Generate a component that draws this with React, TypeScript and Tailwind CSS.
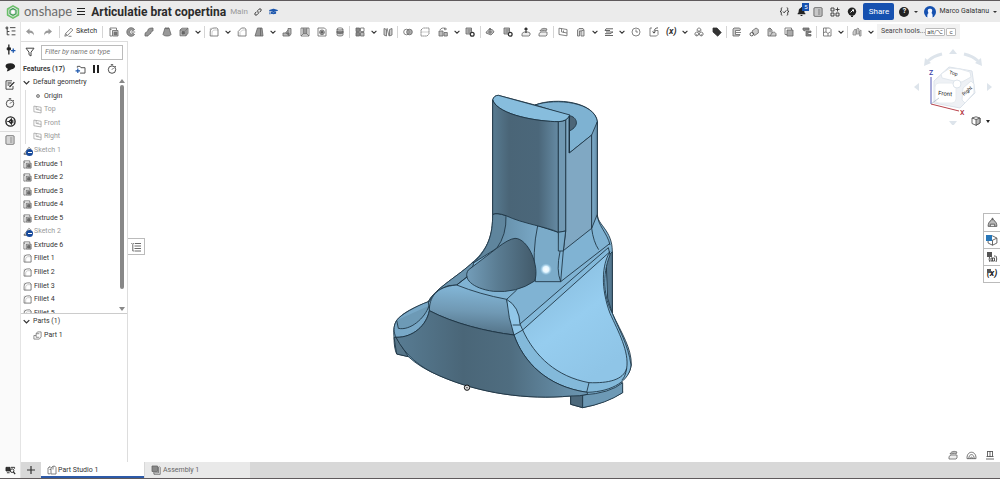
import type { ReactNode } from "react";
import { FaGraduationCap, FaBell } from "react-icons/fa";

const ICONS: Record<string, ReactNode> = {
  undo: <path d="M1 4.500 4.500 1.500v1.900C7.500 3.400 9 5 9 8.500 8 6.500 7 5.700 4.500 5.700v1.900z" fill="currentColor" stroke="none" />,
  redo: <path d="M9 4.500 5.500 1.500v1.900C2.500 3.400 1 5 1 8.500 2 6.500 3 5.700 5.500 5.700v1.900z" fill="currentColor" stroke="none" />,
  pencil: <path d="M.8 9.200 1.600 6.500 7 1.200 8.800 3 3.500 8.400zM1.600 6.500l1.900 1.900M4.500 9.300h3" />,
  extrude: <><path d="M3 9H1V1h6.500v2M1 2.500h1.500" /><path d="M3.500 3.500H9V9H3.500z" fill="#ccc" /><path d="M5.200 5.200h2.600v2.600H5.200z" fill="#777" /></>,
  revolve: <><path d="M8.600 2.500A4.300 4.300 0 1 0 8.600 7.500L6.800 6.300a2 2 0 1 1 0-2.600z" fill="#999" /><path d="M4.500 5h4.700" /></>,
  sweep: <path d="M1 9V7c0-2.500 3-1.500 3-4C4 1.500 6 1 9 1v3C7 4 7.400 5 7 6 6 8 4 7 4 9z" fill="#999" />,
  loft: <><path d="M3 1h4l2 6.500c-1 2-7 2-8 0z" fill="#999" /><path d="M3 1c1 1 3 1 4 0" /></>,
  thicken: <><path d="M1 3 3 1.200h6v5L7 8.800H1z" fill="#bbb" /><path d="M1 3h6v5.800M7 3l2-1.800" /><path d="M3 4.500h2.500v2.600H3z" fill="#666" /></>,
  fillet: <><path d="M1.200 9V5c0-2.500 1.500-4 4-4h2.500L9 2.200V9z" /><path d="M1.200 3V1.500L2.500 1M3 9V6c0-2 1-3 3-3h3" opacity=".4" /></>,
  chamfer: <><path d="M1.200 9V4.500L4.500 1h3L9 2.200V9z" /><path d="M3 9V5.500L5.500 3H9" opacity=".4" /></>,
  draft: <><path d="M3.500 1H8l1 8H1z" fill="#999" /><path d="M6.500 1v8" /></>,
  rib: <><path d="M1 6h2.500L6 3V1.500h3V7L7.500 9H1z" fill="#bbb" /><path d="M3.500 6H7v3M6 3v3" fill="#777" /></>,
  shell: <><path d="M1 1h8v8H1z" /><path d="M3 1v6h4V1M1 9l2-2M9 9 7 7" fill="#999" /></>,
  hole: <><path d="M1 1h6.500L9 2.500V9H1z" /><circle cx="5" cy="5.300" r="2.400" fill="#aaa" /><circle cx="5" cy="5.300" r="1" fill="#555" /></>,
  thread: <><path d="M2 2v6c0 1.300 6 1.300 6 0V2" fill="#ddd" /><ellipse cx="5" cy="2" rx="3" ry="1.100" /><path d="M2 4c1 1 5 1 6 0v2c-1 1-5 1-6 0z" fill="#777" /></>,
  pattern: <><rect x="1" y="1" width="3.500" height="3.500" fill="#888" /><rect x="5.500" y="1" width="3.500" height="3.500" /><rect x="1" y="5.500" width="3.500" height="3.500" fill="#888" /><rect x="5.500" y="5.500" width="3.500" height="3.500" fill="#bbb" /></>,
  mirror: <><path d="M1 1.500 3.500 2.500V9L1 8zM9 1.500 6.500 2.500V9L9 8z" fill="#ccc" /><path d="m4 1 2 8" /></>,
  boolean: <><circle cx="3.500" cy="5" r="2.800" /><circle cx="6.500" cy="5" r="2.800" fill="#888" fillOpacity=".7" /></>,
  split: <><path d="M1 3 3 1h6v6L7 9H1z" strokeDasharray="1.500 .5" /><path d="M1 5h8" opacity=".4" /></>,
  transform: <><path d="M1 4h4v5H1zM6 5.500h3.300V9H6z" fill="#bbb" /><path d="M2 3c1-2 3-2.500 5-1.500M7 .5v2.800M6 2h3" /></>,
  remove: <><path d="M1 1h5.500v6H1z" fill="#bbb" /><path d="M2.500 3h4M2.500 5h3" /><circle cx="7.200" cy="7.200" r="1.900" fill="#fff" stroke="#333" strokeWidth="1.300" /></>,
  moveFace: <><path d="M1 6c1-4 7-5 8-1L6 8z" fill="#bbb" /><path d="M5 1v6M3.600 3 5 1l1.400 2M3 5h4" /></>,
  appearance: <><path d="M5 .8 7.500 6h-5z" fill="#777" /><path d="M3.800 3C2 4 1 6 1 8.500h8C9 6 8 4 6.200 3M3 8.500V6.500h4v2" fill="#bbb" /></>,
  offset: <><path d="M1 9V6.500l2-1.500h4l2 1v2L8 9z" fill="#eee" /><path d="M5 1v5M3.500 2.500 5 1l1.500 1.500" stroke="#333" strokeWidth="1.200" /></>,
  replace: <><path d="M1 9V6.500L3 5h6v3L8 9z" fill="#eee" /><path d="M2 4c1-3 5-3 7-2L8 4C6 3 4 4 2 4z" fill="#bbb" /></>,
  plane: <path d="M1 1.200 9 2.500v6.300L1 7.500zM3.500 1.600v3.300L9 6M5.500 3.500v2" />,
  frame: <path d="M1.500 3 3 1.500h4L8 3v6H5V4H3.500v5h-2zM8 3 5 4" fill="#ddd" />,
  helix: <path d="M2 1.800h7M1 3.500h5M2 5h7M1 6.700h5M1 8.500h8M2 1.800 1 3.500M9 5 6 6.700" strokeWidth="1" />,
  clock: <><circle cx="5" cy="5" r="4" /><path d="M5 2.500V5h2" /></>,
  derive: <><path d="M3 1H1v8h6.500L9 7.500V3.500H6" /><path d="M9 .8C6 1 5 2.500 5 6M3.500 4.500 5 6.200l1.500-1.700" stroke="#333" /></>,
  composite: <path d="M5 .8 6.800 2v2L5 5 3.200 4V2zM2.800 5l1.800 1v2L2.800 9 1 8V6zM7.200 5 9 6v2L7.200 9l-1.800-1V6zM5 3v2M2.800 7v2M7.200 7v2" />,
  tag: <path d="M1 1h4l4.200 4.500-3.500 3.700L1 5z" fill="#333" stroke="#333" />,
  sheet: <><path d="M8.500 2 7.500 1H2L1 2v7h6l1-1.500H3.500v-4H8z" fill="#ccc" /><path d="M4 5.500h5" /></>,
  flange: <><path d="M3 4 7 1l2.300 1.500V6L5.500 8.500z" fill="#ccc" /><circle cx="2.700" cy="7.200" r="1.700" stroke="#333" /></>,
  hem: <path d="M1 9V2l2-1 2 2v3c2-2 4 0 4 1v2zM3 1v4M5 6l-2 3" fill="#ccc" />,
  tab: <><path d="M1 1h6.500v6.500H1z" /><path d="M3 3h6v6H3z" fill="#aaa" /></>,
  joint: <path d="M1 1h6v2H3v1L1 3zM4 4h5v1.500H6v2h3V9H4z" fill="#888" />,
  finish: <><path d="M1.500 1h6L9 2.500V9H1.500z" /><path d="M4 1v4l2 1.500L8 5M1.500 5.500 4 5M6 6.500V9" /></>,
  frames: <path d="M1 8V5l2-3 1 1v5zM4.500 7V2L6 1l1 1v5zM7.500 9V4L9 3v6z" fill="#ccc" stroke="#888" />,
  part: <path d="M1 9V5h2.500V3L5 1h4v5.500L7 9zM3.500 5v2H7M3.500 3H7" />,
  sketch: <path d="M1 9 6.500 1.500 8.500 3 4 9zM1 9h4" />,
  studio: <path d="M3.500 8.800H1V3L3 1.500V3M4 9V3l2-1.800h2L9 2.500V9zM6 1.200v3.300M2.500 4.500h1.500" />,
  assembly: <><path d="M1 1h5.500v5.500H1z" fill="#888" /><path d="M3 8v1.300h6.200V2.500L8 1.300M2 7.800h5.500V2" /></>,
  tree: <path d="M4.500 1.500h5M6 4.500h3.500M6 8h3.500M1 1h1.500v1.500H1zM2 2.500V8h2M2 5h2" />,
  note: <><path d="M7 .8H1v8.400h7V6" /><path d="M2.500 3h4M2.500 5h2M4.500 7 9.300 2.200" strokeWidth="1.200" /></>,
  stopwatch: <><circle cx="5" cy="5.600" r="3.700" /><path d="M3.800.7h2.400M5 5.600l1.500-1.500M8 2l.8.800" /></>,
  list: <><rect x="1" y=".8" width="8" height="8.400" rx=".6" /><path d="M2.500 3h1M4.500 3h3.200M2.500 5h1M4.500 5h3.200M2.500 7h1M4.500 7h3.200" /></>,
  insert: <><path d="M3.500.5v9" strokeWidth="1.200" /><path d="M2 3.500h3v1.800H2z" fill="currentColor" /><path d="M7.500 4v4M5.500 6h4" stroke="#1d57ad" strokeWidth="1.200" /></>,
  cube: <path d="M5 .8 9 2.800v4.500L5 9.300 1 7.300V2.800zM1 2.800l4 2 4-2M5 4.800v4.500" />,
};

type IconProps = { name: string; className?: string };

const Icon = ({ name, className = "size-[10px] text-[#666]" }: IconProps) => (
  <svg viewBox="0 0 10 10" className={`shrink-0 ${className}`} fill="none" stroke="currentColor" strokeWidth=".8" strokeLinejoin="round" aria-hidden="true">
    {ICONS[name]}
  </svg>
);

const Chevron = ({ className = "size-[6px]" }: { className?: string }) => (
  <svg viewBox="0 0 6 6" className={`shrink-0 ${className}`} fill="none" stroke="#333" strokeWidth="1.100" aria-hidden="true">
    <path d="m.6 1.800 2.400 2.400 2.400-2.400" />
  </svg>
);

// "v" is a drop-down arrow, "|" is a divider
const TOOLS =
  "extrude revolve sweep loft thicken v | fillet v chamfer draft v rib shell hole thread | pattern v mirror | boolean split transform v remove | moveFace remove offset replace | plane frame v helix v clock derive variable v composite tag | sheet flange hem tab joint | finish v | frames v".split(" ");

const Tool = ({ name }: { name: string }) => {
  if (name === "|") {
    return <span className="flex min-w-0 flex-[1] justify-center"><span className="h-3 w-px bg-[#d5d5d5]" /></span>;
  }
  if (name === "v") {
    return <button aria-label="More" className="flex min-w-0 flex-[4] justify-center"><Chevron /></button>;
  }
  return (
    <button aria-label={name} className="flex min-w-0 flex-[7] items-center justify-center">
      {name === "variable" ? <span className="text-[9px] leading-none font-bold text-[#333] italic">(x)</span> : <Icon name={name} />}
    </button>
  );
};

const Header = () => (
  <header className="flex h-[22px] shrink-0 items-center border-t border-[#5f5a5c] bg-[#ebebeb] text-[#333]">
    <a href="#home" className="ml-[6px] flex items-center gap-[4px]">
      <svg viewBox="0 0 14 14" className="size-[14px]" fill="none" aria-hidden="true">
        <path d="M7 .9 12.400 4v6L7 13.100 1.600 10V4z" stroke="#6abf69" strokeWidth="1.600" strokeLinejoin="round" />
        <path d="M7 3.600 10 5.300v3.400L7 10.400 4 8.700V5.300z" stroke="#3f9d56" strokeWidth="1.300" />
        <path d="M4 5.300 1.600 4M10 8.700l2.400 1.300M7 10.400v2.700" stroke="#8fcf85" />
        <path d="m5.800 6.300 1.200-.7 1.200.7v1.400L7 8.400l-1.200-.7z" fill="#fff" />
      </svg>
      <span className="font-[Lato] text-[13px] leading-none text-[#6b6b6b]">onshape</span>
    </a>
    <button aria-label="Menu" className="ml-[5px] flex w-2 flex-col gap-[2px]">
      <span className="h-px w-full bg-[#222]" />
      <span className="h-px w-full bg-[#222]" />
      <span className="h-px w-full bg-[#222]" />
    </button>
    <h1 className="ml-[6px] text-[12px] leading-none font-bold text-[#2b2b2b]">Articulatie brat copertina</h1>
    <span className="ml-[4px] text-[8px] leading-none text-[#999]">Main</span>
    <button aria-label="Copy link" className="ml-[6px]">
      <svg viewBox="0 0 10 10" className="size-[8px]" fill="none" stroke="#333" strokeWidth="1.200" aria-hidden="true">
        <path d="M4.500 5.500C3.700 4.500 4 3.800 4.600 3.200L6.300 1.500C8 0 10 2 8.500 3.700L7.300 5M5.500 4.500c.8 1 .5 1.700-.1 2.300L3.700 8.500C2 10 0 8 1.500 6.300L2.700 5" />
      </svg>
    </button>
    <FaGraduationCap className="ml-[7px] size-[9px] text-[#1d57ad]" />
    <div className="ml-auto flex items-center pr-[3px]">
      <button aria-label="Feature script">
        <svg viewBox="0 0 12 10" className="h-[9px] w-[11px]" fill="none" stroke="#333" strokeWidth="1.100" aria-hidden="true">
          <path d="M3.500.8C2 .8 2.500 2 2.500 3.500 2.500 4.500 2 5 1 5c1 0 1.500.5 1.500 1.500C2.500 8 2 9.200 3.500 9.200M8.500.8c1.500 0 1 1.200 1 2.700 0 1 .5 1.500 1.500 1.500-1 0-1.500.5-1.500 1.500 0 1.500.5 2.700-1 2.700M4.300 5l1.300 1.500L8 3.700" />
        </svg>
      </button>
      <button aria-label="Notifications" className="relative ml-[7px]">
        <FaBell className="size-[9px] text-[#222]" />
        <span className="absolute -top-[4px] left-[5px] flex h-[8px] w-[7px] items-center justify-center bg-[#1651b0] text-[6px] leading-none text-white">5</span>
      </button>
      <button aria-label="Checklist" className="ml-[7px]"><Icon name="list" className="size-[10px] text-[#333]" /></button>
      <button aria-label="App store" className="ml-[7px]">
        <svg viewBox="0 0 10 10" className="size-[10px]" fill="none" stroke="#333" strokeWidth=".9" aria-hidden="true">
          <path d="M1 1h3v3H1zM1 6h3v3H1zM6 6h3v3H6zM7.500.5v4M5.500 2.500h4" />
        </svg>
      </button>
      <button aria-label="Learning" className="ml-[7px]">
        <svg viewBox="0 0 10 10" className="size-[10px]" aria-hidden="true">
          <circle cx="5" cy="4.600" r="4.200" fill="#222" />
          <path d="M4 9.500h2" stroke="#222" strokeWidth="1.500" />
          <path d="m3.500 5.500 3-3M5 3h1.500v1.600" stroke="#fff" fill="none" />
        </svg>
      </button>
      <button className="ml-[6px] h-[17px] w-[31px] rounded-[2px] bg-[#1651b0] text-[8px] text-white">Share</button>
      <button aria-label="Help" className="ml-[5px] flex items-center gap-[5px]">
        <span className="flex size-[10px] items-center justify-center rounded-full bg-[#222] text-[7px] font-bold text-white">?</span>
        <span className="border-x-2 border-t-2 border-x-transparent border-t-[#333]" />
      </button>
      <button className="ml-[6px] flex items-center text-[7px]">
        <svg viewBox="0 0 12 12" className="size-[12px]" aria-hidden="true">
          <circle cx="6" cy="6" r="6" fill="#1651b0" />
          <path d="M3.500 12C3 8 4 7.500 4.500 7 3 4 4 2.800 6 2.800S9 4 7.500 7C8 7.500 9 8 8.500 12z" fill="#f5f8ff" />
        </svg>
        <span className="ml-[3px]">Marco Galatanu</span>
        <span className="ml-[4px] border-x-2 border-t-2 border-x-transparent border-t-[#333]" />
      </button>
    </div>
  </header>
);

const Toolbar = () => (
  <div className="flex h-[19px] shrink-0 items-center bg-white">
    <div className="flex h-full w-[21px] shrink-0 items-center justify-center border-r border-[#e4e4e4] bg-[#fafafa]">
      <Icon name="tree" className="size-[11px] text-[#333]" />
    </div>
    <button aria-label="Undo" className="ml-[4px]"><Icon name="undo" className="size-[10px] text-[#999]" /></button>
    <button aria-label="Redo" className="ml-[8px]"><Icon name="redo" className="size-[10px] text-[#999]" /></button>
    <span className="ml-[6px] h-3 w-px shrink-0 bg-[#d5d5d5]" />
    <button className="ml-[4px] flex shrink-0 items-center gap-[2px] text-[7px] text-[#333]">
      <Icon name="pencil" />
      Sketch
    </button>
    <span className="ml-auto h-3 w-px shrink-0 bg-[#d5d5d5]" />
    <div className="ml-[2px] flex w-[771px] max-w-[calc(100%-229px)] flex-none items-center">
      {TOOLS.map((name, i) => <Tool key={i} name={name} />)}
    </div>
    <button className="mr-[40px] ml-px flex h-[15px] w-[83px] shrink-0 items-center bg-[#f2f2f2] pl-[4px] text-[7px] whitespace-nowrap text-[#444]">
      Search tools...
      <kbd className="ml-auto rounded-[1px] border border-[#bbb] bg-white px-px font-[Roboto] text-[6px] leading-[6px]">alt/⌥</kbd>
      <kbd className="mr-[5px] ml-px rounded-[1px] border border-[#bbb] bg-white px-[2px] font-[Roboto] text-[6px] leading-[6px]">c</kbd>
    </button>
  </div>
);

const LeftRail = () => (
  <nav className="flex w-[21px] shrink-0 flex-col items-center border-r border-[#e4e4e4] bg-[#fafafa] text-[#222]">
    <button aria-label="Insert" className="mt-[3px]"><Icon name="insert" className="size-[11px] text-[#222]" /></button>
    <button aria-label="Comments" className="mt-[7px]">
      <svg viewBox="0 0 12 10" className="h-[10px] w-[11px]" fill="#222" aria-hidden="true">
        <path d="M6 .8c6.600 0 6.600 6.800.5 6.800C5 9 3.500 9.500 2 9.500L3 7C-.8 5-.3.8 6 .8z" />
      </svg>
    </button>
    <button aria-label="Notes" className="mt-[8px]"><Icon name="note" className="size-[10px] text-[#222]" /></button>
    <button aria-label="History" className="mt-[8px]"><Icon name="stopwatch" className="size-[10px] text-[#222]" /></button>
    <button aria-label="Render" className="mt-[8px]">
      <svg viewBox="0 0 12 12" className="size-[11px]" fill="none" stroke="#222" aria-hidden="true">
        <circle cx="6" cy="6" r="5" strokeWidth="1.500" />
        <path d="M2.500 6h2L7 3.500v5L4.500 6M8.500 4v4" strokeWidth="1.300" />
      </svg>
    </button>
    <span className="mt-[4px] h-px w-full bg-[#ddd]" />
    <button aria-label="Properties" className="mt-[3px]"><Icon name="list" className="size-[10px] text-[#444]" /></button>
    <button aria-label="Search in tab" className="mt-auto mb-[3px]">
      <svg viewBox="0 0 12 10" className="h-[9px] w-[11px]" fill="none" stroke="#222" aria-hidden="true">
        <path d="M1 1.500h4.500v4H1z" fill="#333" />
        <path d="M6.500 1.500h4V3M2 7.500h3" />
        <circle cx="7.800" cy="5.200" r="2" />
        <path d="m9.200 6.600 2 2.400" strokeWidth="1.300" />
      </svg>
    </button>
  </nav>
);

const FEATURES = [
  { label: "Sketch 1", icon: "sketch" },
  ...[1, 2, 3, 4, 5].map((n) => ({ label: `Extrude ${n}`, icon: "extrude" })),
  { label: "Sketch 2", icon: "sketch" },
  { label: "Extrude 6", icon: "extrude" },
  ...[1, 2, 3, 4, 5].map((n) => ({ label: `Fillet ${n}`, icon: "fillet" })),
];

const FeaturePanel = () => (
  <aside className="flex w-[107px] shrink-0 flex-col border-t border-r border-[#ddd] bg-white text-[7px] leading-none text-[#333]">
    <div className="flex h-[20px] shrink-0 items-center pr-[4px] pl-[4px]">
      <svg viewBox="0 0 10 10" className="size-[10px] shrink-0" fill="none" stroke="#444" aria-hidden="true">
        <path d="M1 1.200h8L6 5.200V9L4 7.700V5.200z" />
      </svg>
      <input aria-label="Filter features" placeholder="Filter by name or type" className="ml-[6px] h-[15px] min-w-0 flex-1 border border-[#bbb] px-[3px] text-[7px] italic placeholder:text-[#777]" />
    </div>
    <div className="flex h-[14px] shrink-0 items-center pr-[10px] pl-[2px]">
      <h2 className="font-semibold">Features (17)</h2>
      <button aria-label="New folder" className="ml-auto">
        <svg viewBox="0 0 12 10" className="h-[9px] w-[11px]" fill="none" stroke="#444" aria-hidden="true">
          <path d="M2.500 3V1.500h3L6.500 3h4.500v6H5.500" />
          <path d="M3 4v5M.5 6.500h5" stroke="#1d57ad" strokeWidth="1.300" />
        </svg>
      </button>
      <button aria-label="Pause" className="ml-[7px] h-[8px] w-[6px] border-x-2 border-[#222]" />
      <button aria-label="Regeneration times" className="ml-[8px]"><Icon name="stopwatch" className="size-[10px] text-[#222]" /></button>
    </div>
    <div className="flex h-[238px] shrink-0 overflow-hidden border-b border-[#ccc]">
      <ul className="grid h-[244px] min-w-0 flex-1 auto-rows-fr items-center">
        <li className="flex items-center gap-[3px] pl-[2px]"><Chevron className="size-[7px]" />Default geometry</li>
        <li className="ml-[4px] flex h-full items-center border-l border-[#ddd] pl-[8px]">
          <span className="mr-[4px] ml-[2px] size-[4px] rounded-full border border-[#888] bg-[#bbb]" />
          Origin
        </li>
        {["Top", "Front", "Right"].map((name) => (
          <li key={name} className="ml-[4px] flex h-full items-center gap-[2px] border-l border-[#ddd] pl-[7px] text-[#999]">
            <Icon name="plane" className="size-[9px] text-[#999]" />
            {name}
          </li>
        ))}
        {FEATURES.map(({ label, icon }) => (
          <li key={label} className={`flex items-center gap-[2px] pl-[2px] ${icon === "sketch" ? "text-[#999]" : ""}`}>
            <span className="relative flex">
              <Icon name={icon} className="size-[9px] text-[#555]" />
              {icon === "sketch" && (
                <span className="absolute top-[3px] left-[3px] flex size-[7px] items-center justify-center rounded-full bg-[#174a9c]">
                  <span className="h-px w-[4px] bg-white" />
                </span>
              )}
            </span>
            {label}
          </li>
        ))}
      </ul>
      <div className="flex w-[11px] flex-col items-center pt-[3px] pb-[2px]">
        <span className="border-x-[3px] border-b-[4px] border-x-transparent border-b-[#888]" />
        <span className="mt-[2px] h-[204px] w-[4px] rounded-full bg-[#888]" />
        <span className="mt-auto border-x-[3px] border-t-[4px] border-x-transparent border-t-[#888]" />
      </div>
    </div>
    <h2 className="flex h-[14px] items-center gap-[3px] pl-[2px]"><Chevron className="size-[7px]" />Parts (1)</h2>
    <div className="flex h-[14px] items-center gap-[2px] pl-[12px]"><Icon name="part" className="size-[9px] text-[#666]" />Part 1</div>
  </aside>
);

const Model = () => (
  <svg viewBox="-756 -132 2616 1263" className="size-full" fill="none" stroke="#1d3342" strokeWidth="2.600" strokeLinejoin="round" role="img" aria-label="Part 1">
    <defs>
      <linearGradient id="plate">
        <stop offset="0" stopColor="#587b91" />
        <stop offset=".25" stopColor="#4a6577" />
        <stop offset=".7" stopColor="#4b677a" />
        <stop offset="1" stopColor="#658aa3" />
      </linearGradient>
      <linearGradient id="side">
        <stop offset="0" stopColor="#7fb0cf" />
        <stop offset="1" stopColor="#648ca7" />
      </linearGradient>
      <linearGradient id="neck">
        <stop offset="0" stopColor="#5b7f96" />
        <stop offset=".5" stopColor="#6e9ab6" />
        <stop offset="1" stopColor="#86b8d8" />
      </linearGradient>
      <linearGradient id="bore">
        <stop offset="0" stopColor="#739db9" />
        <stop offset=".45" stopColor="#5a7c92" />
        <stop offset="1" stopColor="#425a6a" />
      </linearGradient>
      <linearGradient id="roll" x1=".3" y1="0" x2=".2" y2="1">
        <stop offset="0" stopColor="#83b7d8" />
        <stop offset=".5" stopColor="#7099b4" />
        <stop offset="1" stopColor="#4f6d81" />
      </linearGradient>
      <linearGradient id="front">
        <stop offset="0" stopColor="#587c93" />
        <stop offset=".35" stopColor="#4a6678" />
        <stop offset=".6" stopColor="#4f6d80" />
        <stop offset="1" stopColor="#6d98b4" />
      </linearGradient>
      <linearGradient id="wing" x1="0" y1="0" x2=".6" y2="1">
        <stop offset="0" stopColor="#82b5d5" />
        <stop offset=".6" stopColor="#96cdef" />
        <stop offset="1" stopColor="#8fc5e7" />
      </linearGradient>
      <radialGradient id="glow">
        <stop offset="0" stopColor="#fff" />
        <stop offset=".5" stopColor="#e4f6ff" />
        <stop offset="1" stopColor="#9fd2ef" stopOpacity="0" />
      </radialGradient>
    </defs>

    {/* silhouette */}
    <path
      d="M338 45Q342 31 355 31L465 60C530 35 645 52 652 110V388C652 420 697 435 697 500V685C725 745 755 790 754 840Q750 870 725 885L728 923Q670 957 608 968L572 958V933C440 945 300 925 180 873Q120 848 85 815L50 807Q42 790 42 757 38 725 50 706C70 680 110 665 145 650 165 610 240 570 280 530 325 490 338 450 338 388z"
      fill="#80b3d3"
    />
    {/* feet */}
    <path d="M42 757 50 807 85 815 48 757z" fill="#567589" />
    <path d="M572 930V958L608 968V930z" fill="#4d697c" />
    <path d="M608 968Q680 955 728 923V893Q690 925 608 930z" fill="#6d99b5" />

    {/* neck and left flank */}
    <path d="M338 388Q350 382 378 392 430 417 473 422 510 430 535 442L542 590H466L350 490 280 530C325 490 338 450 338 388z" fill="url(#neck)" stroke="none" />
    <path d="M338 388Q350 382 378 392 380 450 350 490L280 534C325 490 338 450 338 388z" fill="#5f859d" />
    <path d="M473 422 535 442 540 500Q528 555 542 590H466Q456 500 473 422z" fill="#7babc9" />
    <path d="M145 650C165 610 240 570 280 530V540L262 575 230 600 205 602Q165 615 148 650z" fill="#6a94ae" />

    {/* back cylinder and slot */}
    <path d="M465 60C530 38 645 52 652 110Q650 140 633 152L568 204V92z" fill="#7eb2d2" />
    <path d="M568 92C590 95 602 122 568 138z" fill="#4d6678" />
    <path d="M557 105 568 92V204L635 150V430L550 497 557 440z" fill="#80a8c3" />
    <path d="M635 150 652 110V388L635 430z" fill="url(#side)" />
    <path d="M635 430Q640 470 656 494M652 388C652 420 683 445 690 480M550 497 542 590 690 475" />

    {/* front plate */}
    <path d="M338 45Q342 31 355 31L570 90Q560 110 535 110C480 110 355 92 338 45z" fill="#87bddd" />
    <path d="M338 45C355 92 480 110 535 110V442C500 425 430 417 378 392Q350 382 338 388z" fill="url(#plate)" />
    <path d="M535 110Q550 110 557 105V438L535 442z" fill="#7199b3" />
    <path d="M535 442V498H550L557 438z" fill="#79a9c7" />
    <path d="M568 92V204" strokeWidth="4" />

    {/* through hole */}
    <path d="M405 460C445 460 480 545 464 588Q410 625 340 619C275 610 248 580 265 555L350 490Q385 462 405 460z" fill="url(#bore)" />

    {/* right wing */}
    <path d="M678 520 697 500V685L683 640z" fill="#557991" />
    <path d="M402 750C430 830 500 905 622 922 700 920 750 885 753 840 745 780 715 730 697 685 672 640 665 570 690 510L685 488 420 717z" fill="#83b9da" />
    <path d="M428 735 690 500C665 540 662 610 690 685 715 740 748 800 740 850 730 885 685 895 627 893 530 875 465 815 428 735z" fill="url(#wing)" />
    <path d="M627 893 620 922M725 885Q735 880 740 850" />

    {/* front roll */}
    <path d="M148 677C148 640 165 605 230 600Q300 628 380 643 392 700 402 750C320 740 220 715 148 677z" fill="url(#roll)" />
    <path d="M380 643Q418 665 420 717L428 735 402 750Q385 700 380 643z" fill="#91c7e8" />
    <path d="M398 720H420M380 643 410 615M262 575 230 600" />

    {/* left lobe */}
    <path d="M145 650C110 662 60 690 50 706 38 725 42 745 48 757 100 758 140 720 148 677z" fill="#78a8c7" />
    <path d="M50 706 55 730C90 738 135 700 147 662" fill="#6d9ab6" />

    {/* front face */}
    <path d="M148 677C220 715 320 740 402 750 430 830 500 905 622 922V928Q600 934 572 933C440 945 300 925 180 873 120 848 75 810 48 757 100 758 140 720 148 677z" fill="url(#front)" />

    <circle cx="498" cy="553" r="18" fill="url(#glow)" stroke="none" />
    <circle cx="261" cy="908" r="8" fill="#ddd" stroke="#111" strokeWidth="3" />
    <circle cx="261" cy="908" r="2" fill="#111" stroke="none" />
  </svg>
);

const CanvasControls = () => (
  <>
    <svg viewBox="910 45 90 80" className="absolute top-[4px] right-0 h-[80px] w-[90px] font-[Roboto]" fill="none" role="img" aria-label="View cube">
      <g fill="#dde4eb">
        <path d="m953 49 4 5h-8zM953 126l4-5h-8zM914 87l5-4v8zM992 87l-5-4v8z" />
        <path d="m924 66 1-8 6 5zM982 66l-1-8-6 5z" />
      </g>
      <path d="M928 61Q933 56 942 54M964 54Q973 56 978 61" stroke="#dde4eb" strokeWidth="3" />
      <path d="m934 81 15-14 23 4 3 22-15 15-26-5z" fill="#eef1f5" stroke="#dbe2ea" strokeLinejoin="round" />
      <path d="m941 74 9-6q10 0 20 4l1 5-9 5q-10-1-20-4z" fill="#fff" stroke="#e1e7ed" />
      <rect x="935" y="83" width="21" height="20" rx="4" fill="#fff" stroke="#e8ecf0" />
      <path d="m963 88 8-7 3 3v9l-9 10-3-3z" fill="#fff" stroke="#e1e7ed" />
      <circle cx="957" cy="84" r="4" fill="#fff" stroke="#dde4eb" />
      <path d="M931 77v27" stroke="#5558b5" />
      <path d="m931 104 28 7" stroke="#b9434c" />
      <path d="m931 104 8-6" stroke="#9ab" strokeWidth=".6" />
      <text x="929" y="75" fontSize="7" fontWeight="500" fill="#3b3fa8">Z</text>
      <text x="960" y="115" fontSize="7" fontWeight="500" fill="#b02a35">X</text>
      <text x="938" y="95" fontSize="6" fill="#222" transform="rotate(5 938 95)">Front</text>
      <text x="964" y="96" fontSize="5" fill="#222" transform="rotate(-42 964 96)">Right</text>
      <text x="949" y="74" fontSize="5" fill="#222" transform="rotate(12 949 74)">Top</text>
    </svg>
    <button aria-label="View options" className="absolute top-[75px] right-[10px] flex items-center gap-[5px]">
      <svg viewBox="0 0 10 10" className="size-[10px]" stroke="#444" strokeWidth=".8" strokeLinejoin="round" aria-hidden="true">
        <path d="m1 2 4-1.200 4 1.200v5L5 9.300 1 7.500z" fill="#fff" />
        <path d="m5 3.500 4-1.500v5L5 9.300z" fill="#bbb" />
        <path d="m1 2 4 1.500" />
      </svg>
      <span className="border-x-2 border-t-[3px] border-x-transparent border-t-[#222]" />
    </button>
    <button aria-label="Feature list" className="absolute top-[197px] left-0 flex h-[17px] w-[17px] items-center justify-center border border-l-0 border-[#bbb] bg-white">
      <svg viewBox="0 0 10 10" className="size-[10px]" fill="none" stroke="#444" strokeWidth=".8" aria-hidden="true">
        <path d="m.4 1 1.400 1.500L3.200 1M4 1.500h6M3.500 4H10M3.500 6.500H10M3.500 9H10M1.800 3v6h1" />
      </svg>
    </button>
    <div className="absolute top-[172px] right-0 flex w-[17px] flex-col border border-r-0 border-[#bbb] bg-white">
      <button aria-label="Appearance" className="flex h-[17px] items-center justify-center"><Icon name="appearance" className="size-[11px] text-[#555]" /></button>
      <button aria-label="Configurations" className="relative flex h-[17px] items-center justify-center border-t border-[#bbb]">
        <Icon name="cube" className="size-[11px] text-[#555]" />
        <span className="absolute top-[3px] left-[2px] size-[6px] bg-[#2877b8]" />
      </button>
      <button aria-label="Named views" className="relative flex h-[17px] items-center justify-center border-t border-[#bbb]">
        <svg viewBox="0 0 11 11" className="size-[11px]" fill="none" stroke="#444" strokeWidth=".9" aria-hidden="true">
          <path d="M2.500 5Q1.500 8 3 10M9 4q1.500 3 0 6M4 6h3.500v3H4zM5.500 6v3M7 4h1.500" />
        </svg>
        <span className="absolute top-[3px] left-[3px] size-[5px] bg-[#555]" />
      </button>
      <button aria-label="Variables" className="relative flex h-[17px] items-center justify-center border-t border-[#bbb] text-[9px] font-bold text-[#222] italic">
        (x)
        <span className="absolute top-[3px] left-[3px] size-[4px] bg-[#555]" />
      </button>
    </div>
    <div className="absolute right-[5px] bottom-[2px] flex items-center gap-[8px]">
      <Icon name="replace" />
      <svg viewBox="0 0 12 10" className="h-[9px] w-[11px]" fill="none" stroke="#555" strokeWidth=".9" aria-hidden="true">
        <path d="M1 8.500C.5-1 11.500-1 11 8.500zM3 8.500c0-6 6-6 6 0M5 8.500c0-2.500 2-2.500 2 0" />
      </svg>
      <svg viewBox="0 0 10 10" className="size-[10px]" fill="none" stroke="#444" strokeWidth=".8" aria-hidden="true">
        <path d="M1 9h8M2 1.500h6M5 1v6M1.500 6.500h7M2.500 1.500v5M7.500 1.500v5" />
      </svg>
    </div>
  </>
);

const TabBar = () => (
  <div className="flex h-[16px] shrink-0 bg-[#d8d8d8] text-[7px] text-[#333]">
    <button aria-label="New tab" className="flex w-[20px] items-center justify-center">
      <svg viewBox="0 0 8 8" className="size-[8px]" stroke="#333" strokeWidth="1.200" aria-hidden="true"><path d="M4 0v8M0 4h8" /></svg>
    </button>
    <button className="relative flex w-[103px] items-center gap-px bg-white pl-[6px]">
      <Icon name="studio" />
      Part Studio 1
      <span className="absolute inset-x-0 bottom-0 h-[2px] bg-[#2d5aa8]" />
    </button>
    <button className="ml-px flex w-[105px] items-center gap-[2px] bg-[#e9e9e9] pl-[6px] text-[#666]"><Icon name="assembly" />Assembly 1</button>
  </div>
);

export default function App() {
  return (
    <div className="flex h-screen flex-col overflow-hidden border-b border-[#5f5a5c] bg-white font-[Roboto,sans-serif]">
      <Header />
      <Toolbar />
      <div className="flex min-h-0 flex-1">
        <LeftRail />
        <div className="flex min-w-0 flex-1 flex-col">
          <div className="flex min-h-0 flex-1">
            <FeaturePanel />
            <main className="relative min-w-0 flex-1">
              <Model />
              <CanvasControls />
            </main>
          </div>
          <TabBar />
        </div>
      </div>
    </div>
  );
}
